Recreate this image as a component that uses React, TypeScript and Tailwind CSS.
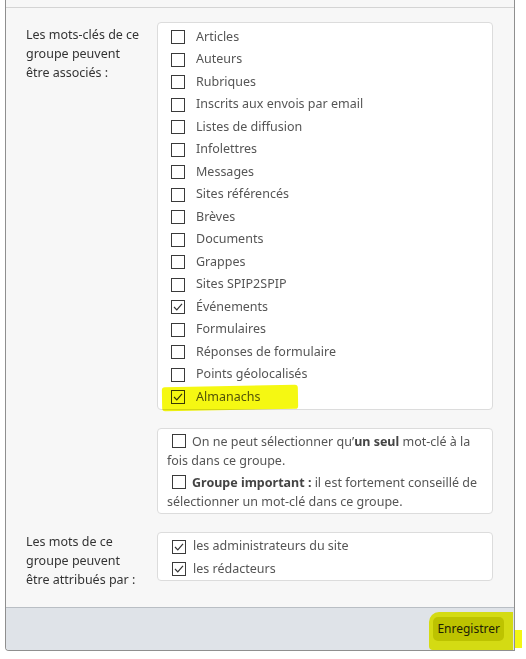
import React from "react";

const objets = [
  "Articles",
  "Auteurs",
  "Rubriques",
  "Inscrits aux envois par email",
  "Listes de diffusion",
  "Infolettres",
  "Messages",
  "Sites référencés",
  "Brèves",
  "Documents",
  "Grappes",
  "Sites SPIP2SPIP",
  "Événements",
  "Formulaires",
  "Réponses de formulaire",
  "Points géolocalisés",
  "Almanachs",
];
const coches = ["Événements", "Almanachs"];

function Case({ checked }: { checked?: boolean }) {
  return (
    <svg width="14" height="14" viewBox="0 0 14 14" className="shrink-0 inline-block align-[-2px]">
      <rect x="0.5" y="0.5" width="13" height="13" fill="#fff" stroke="#3a3a3a" />
      {checked && <path d="M3 7 L5.8 9.8 L11 3.8" fill="none" stroke="#333" strokeWidth="1.2" />}
    </svg>
  );
}

export default function App() {
  return (
    <div className="w-[526px] h-[659px] bg-white font-['Noto_Sans',sans-serif] text-[12.5px] relative">
      <div className="ml-[5px] w-[510px] h-[651px] flex flex-col border-l border-r border-b border-[#8f8f8f] rounded-bl-[4px] bg-[#f7f7f7] overflow-hidden">
        <div className="h-[8px] border-b border-[#d4d4d4]" />

        {/* mots-clés associés */}
        <div className="flex mt-[14px]">
          <div className="w-[151px] pl-[20px] pr-[14px] pt-[3px] text-[#333] leading-[19px]">
            Les mots-clés de ce groupe peuvent être associés :
          </div>
          <div className="relative w-[336px] bg-white border border-[#dcdcdc] rounded-[4px] pt-[3px] pb-[0px]">
            {objets.map((o) => (
              <label key={o} className="flex items-center h-[22.5px] pl-[13px] text-[#555]">
                <Case checked={coches.includes(o)} />
                <span className="ml-[11px]">{o}</span>
              </label>
            ))}
            <div className="absolute left-[4px] top-[363px] w-[136px] h-[24px] bg-[#f5f812] mix-blend-multiply rounded-[3px] -rotate-1" />
          </div>
        </div>

        {/* options */}
        <div className="flex mt-[18px]">
          <div className="w-[151px]" />
          <div className="w-[336px] bg-white border border-[#dcdcdc] rounded-[4px] pl-[9px] pr-[6px] pt-[3px] pb-[2px] text-[#555] leading-[19px]">
            <p>
              <span className="inline-block ml-[5px] mr-[6px]"><Case /></span>
              On ne peut sélectionner qu’<b className="text-[#444]">un seul</b> mot-clé à la fois dans ce groupe.
            </p>
            <p className="mt-[3px]">
              <span className="inline-block ml-[5px] mr-[6px]"><Case /></span>
              <b className="text-[#444]">Groupe important :</b> il est fortement conseillé de sélectionner un mot-clé dans ce groupe.
            </p>
          </div>
        </div>

        {/* attribution */}
        <div className="flex mt-[18px]">
          <div className="w-[151px] pl-[20px] pr-[14px] pt-[0px] text-[#333] leading-[19px]">
            Les mots de ce groupe peuvent être attribués par :
          </div>
          <div className="w-[336px] h-[49px] bg-white border border-[#dcdcdc] rounded-[4px] pl-[14px] pt-[3px] text-[#555]">
            <label className="flex items-center h-[22.5px]">
              <Case checked />
              <span className="ml-[7px]">les administrateurs du site</span>
            </label>
            <label className="flex items-center h-[22.5px]">
              <Case checked />
              <span className="ml-[7px]">les rédacteurs</span>
            </label>
          </div>
        </div>

        <div className="flex-1" />

        {/* pied */}
        <div className="h-[43px] border-t border-[#b9bec4] bg-[#dfe3e8] flex items-center justify-end pr-[10px]">
          <button className="relative h-[24px] px-[4px] rounded-[5px] bg-[#c7ca00] text-[#222] text-[12px]">
            Enregistrer
          </button>
        </div>
      </div>

      {/* surlignage du bouton */}
      <div className="absolute left-[429px] top-[612px] w-[84px] h-[38px] bg-[#f3f614] mix-blend-multiply rounded-tl-[10px] rounded-bl-[4px]" />
      <div className="absolute left-[515px] top-[630px] w-[7px] h-[18px] bg-[#f3f614]" />
    </div>
  );
}
